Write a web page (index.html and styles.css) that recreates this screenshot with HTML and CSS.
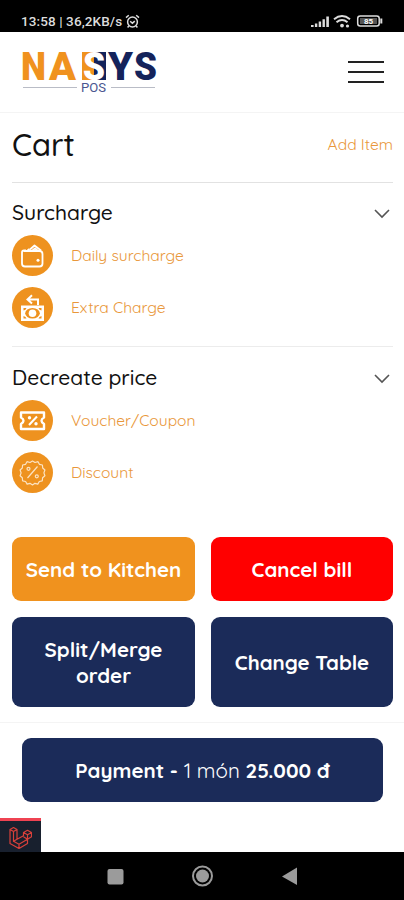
FILE: index.html
```html
<!DOCTYPE html>
<html lang="en">

<head>
  <meta charset="utf-8">
  <meta name="viewport" content="width=device-width, initial-scale=1.0">
  <title>Nasys POS - Cart</title>
  <link rel="stylesheet" href="styles.css">
</head>

<body>

  <div class="status-bar">
    <span class="status-time">13:58 | 36,2KB/s</span>
    <svg class="alarm" width="15" height="15" viewBox="0 0 15 15" fill="none" stroke="#ddd" stroke-width="1.5">
      <circle cx="7.5" cy="8" r="4.9"/>
      <path d="M1 3.6 3.8 1.2M14 3.6 11.2 1.2M5.2 7.2l2.2 2 2.4-2M3.8 12l-1.2 1.5M11.2 12l1.2 1.5"/>
    </svg>
    <svg class="status-icons" width="73" height="15" viewBox="0 0 73 15">
      <g fill="#ddd">
        <path d="M0 11h2.6v2H0zM3.9 9.4h2.4V13H3.9zM7.7 7.4h2.4V13H7.7zM11.5 5.2h2.4V13h-2.4zM15.3 2.5h2.6V13h-2.6z"/>
        <circle cx="31" cy="11.6" r="1.9"/>
        <circle cx="36.5" cy="12" r="1.6"/>
      </g>
      <g fill="none" stroke="#ddd" stroke-width="2">
        <path d="M23 5.2q8-6.4 16 0M25.5 8.2q5.5-4.4 11 0"/>
        <rect x="46.7" y="1.9" width="21.5" height="10" rx="2.5" stroke-width="1.5"/>
        <path d="M70.300 4.500v5"/>
      </g>
      <rect x="49" y="4" width="17" height="6" fill="#555"/>
      <text x="57.5" y="10" text-anchor="middle" class="battery">85</text>
    </svg>
  </div>

  <header class="header">
    <svg class="logo" width="136" height="44" viewBox="0 0 136 44">
      <text x="-1" y="30" class="logo-text orange" textLength="25" lengthAdjust="spacingAndGlyphs">N</text>
      <text x="27" y="30" class="logo-text orange" textLength="27" lengthAdjust="spacingAndGlyphs">A</text>
      <path d="M60 2h12v28H60z" fill="#f0921e"/>
      <path d="M72 2h12v28H72z" fill="#14235b"/>
      <text x="61" y="30" class="logo-text white" textLength="22" lengthAdjust="spacingAndGlyphs">S</text>
      <text x="86" y="30" class="logo-text navy" textLength="25" lengthAdjust="spacingAndGlyphs">Y</text>
      <text x="112" y="30" class="logo-text navy" textLength="23" lengthAdjust="spacingAndGlyphs">S</text>
      <path d="M1 37.500h54M89 37.500h44" stroke="#b9bcc6"/>
      <text x="59" y="42" class="logo-sub" textLength="25" lengthAdjust="spacingAndGlyphs">POS</text>
    </svg>
    <div class="menu">
      <span></span>
      <span></span>
      <span></span>
    </div>
  </header>

  <main class="cart">
    <div class="cart-title">
      <h1>Cart</h1>
      <a class="add-item">Add Item</a>
    </div>

    <section class="group">
      <div class="group-head">
        <h2>Surcharge</h2>
        <svg width="16" height="10" viewBox="0 0 16 10"><path d="M1 1l7 7 7-7" fill="none" stroke="#555" stroke-width="1.6"/></svg>
      </div>
      <a class="option">
        <svg width="41" height="41" viewBox="0 0 41 41">
          <circle cx="20.5" cy="20.5" r="20.5" fill="#ee921f"/>
          <g fill="none" stroke="#fff" stroke-width="1.8" stroke-linejoin="round">
            <path d="M12 16h15.500q3 0 3 3v9.500q0 3-3 3h-14.500q-3 0-3-3V17.500q0-2 2-2h2"/>
            <path d="M15.500 15.500l2-1.500M18 14.500l4.500-4 6.500 5M20.500 15.500l2.500-2 2.500 2"/>
          </g>
          <circle cx="26" cy="25.3" r="1.5" fill="#fff"/>
        </svg>
        <span>Daily surcharge</span>
      </a>
      <a class="option">
        <svg width="41" height="41" viewBox="0 0 41 41">
          <circle cx="20.5" cy="20.5" r="20.5" fill="#ee921f"/>
          <path d="M9 18.500h23v15.500H9z" fill="#fff"/>
          <path d="M11.500 21h3q-.5 2-3 2.500zM29.500 21h-3q.5 2 3 2.500zM11.500 31.500h3q-.5-2-3-2.500zM29.500 31.500h-3q.5-2 3-2.500z" fill="#ee921f"/>
          <ellipse cx="20.5" cy="26.2" rx="7.3" ry="5.3" fill="#ee921f"/>
          <circle cx="20.5" cy="26.2" r="3.8" fill="#fff"/>
          <path d="M26 18v-5.500h-9.500M20 8.300l-4.500 4.200 4.500 4" fill="none" stroke="#fff" stroke-width="2"/>
        </svg>
        <span>Extra Charge</span>
      </a>
    </section>

    <section class="group last">
      <div class="group-head">
        <h2>Decreate price</h2>
        <svg width="16" height="10" viewBox="0 0 16 10"><path d="M1 1l7 7 7-7" fill="none" stroke="#555" stroke-width="1.6"/></svg>
      </div>
      <a class="option">
        <svg width="41" height="41" viewBox="0 0 41 41">
          <circle cx="20.5" cy="20.5" r="20.5" fill="#ee921f"/>
          <g fill="none" stroke="#fff" stroke-width="2.4" stroke-linejoin="round">
            <path d="M9 12.500h23v5q-5 3 0 6.500v5H9v-5q5-3.500 0-6.500z"/>
            <path d="M17 25l8-8.500" stroke-width="2"/>
          </g>
          <circle cx="17.5" cy="17.8" r="1.7" fill="#fff"/>
          <circle cx="24" cy="23.8" r="1.7" fill="#fff"/>
        </svg>
        <span>Voucher/Coupon</span>
      </a>
      <a class="option">
        <svg width="41" height="41" viewBox="0 0 41 41">
          <circle cx="20.5" cy="20.5" r="20.5" fill="#ee921f"/>
          <g fill="none" stroke="#fbe3c4" stroke-width="1.2" stroke-linejoin="round">
            <path d="M20.500 9l2.500 1.500 3-.8 1.400 2.600 3 .7.300 3 2.200 2-1 2.900 1 2.900-2.300 2-.3 3-3 .7-1.500 2.600-2.900-.8-2.400 1.600-2.500-1.600-2.900.8-1.500-2.600-3-.7-.3-3-2.200-2 1-2.900-1-2.900 2.200-2 .3-3 3-.7L15 9.700l3 .8z"/>
            <path d="M15.500 26l10-11.500"/>
            <circle cx="16.5" cy="16.8" r="1.5"/>
            <circle cx="24.8" cy="24.3" r="1.5"/>
          </g>
        </svg>
        <span>Discount</span>
      </a>
    </section>

    <div class="actions">
      <button type="button" class="btn send">Send to Kitchen</button>
      <button type="button" class="btn cancel">Cancel bill</button>
      <button type="button" class="btn">Split/Merge order</button>
      <button type="button" class="btn">Change Table</button>
    </div>
  </main>

  <footer class="footer">
    <button type="button" class="btn payment">Payment - <span>1 món</span> 25.000 đ</button>
    <div class="debugbar">
      <svg width="23" height="23" viewBox="0 0 23 23" fill="none" stroke="#d8403a" stroke-width="1.2" stroke-linejoin="round">
        <path d="M1 3.500L4.500 1.500 8 3.500v9.800l6.500-3.600V6.500l4-2.200 4 2.200v4.300l-4 2.400v4.300l-8.500 5-9-5zM1 3.500l3.500 2L8 3.500M4.500 5.500v9.800L8 13.300M4.500 15.300l5.500 3 8.500-5.100M10 18.300v4.200M14.500 6.500l4 2.300 4-2.300M18.500 8.800v4.400l-4-2.500"/>
      </svg>
    </div>
  </footer>

  <nav class="nav-bar">
    <svg width="404" height="48" viewBox="0 0 404 48">
      <rect x="107.5" y="17" width="16" height="15.5" rx="2" fill="#9b9b9b"/>
      <circle cx="202.5" cy="24" r="9.5" fill="none" stroke="#9b9b9b" stroke-width="2"/>
      <circle cx="202.5" cy="24" r="6.5" fill="#9b9b9b"/>
      <path d="M282 24.500l15-9v17.500z" fill="#9b9b9b"/>
    </svg>
  </nav>

</body>

</html>
```
FILE: styles.css
```css
* {
  box-sizing: border-box;
}

body {
  margin: 0;
  height: 900px;
  display: flex;
  flex-direction: column;
  background: #fff;
  color: #111;
  font-family: Quicksand, Inter, "Open Sans", sans-serif;
}

h1, h2 {
  margin: 0;
  font-weight: 500;
}

/* phone status bar */
.status-bar {
  height: 32px;
  padding: 10px 20px 0 21px;
  display: flex;
  align-items: center;
  background: #000;
  color: #ddd;
  font-family: Roboto, sans-serif;
  font-size: 13.5px;
  font-weight: 500;
}
.status-time {
  letter-spacing: 0.1px;
}
.alarm {
  margin-left: 3px;
}
.status-icons {
  margin-left: auto;
}
.battery {
  font-size: 8px;
  font-weight: 700;
  fill: #fff;
}

.header {
  height: 81px;
  padding: 0 20px 0 22px;
  display: flex;
  align-items: center;
  justify-content: space-between;
  border-bottom: 1px solid #f4f4f4;
}
.logo {
  overflow: visible;
}
.logo-text {
  font-family: Roboto, sans-serif;
  font-size: 39px;
  font-weight: 900;
}
.logo-sub {
  font-family: Roboto, sans-serif;
  font-size: 12px;
  fill: #4a5690;
}
.orange {
  fill: #f0921e;
}
.white {
  fill: #fff;
}
.navy {
  fill: #14235b;
}
.menu {
  width: 36px;
  display: flex;
  flex-direction: column;
  gap: 8px;
}
.menu span {
  height: 2px;
  background: #222;
}

.cart {
  flex: 1;
  padding: 0 11px 0 12px;
}
.cart-title {
  height: 70px;
  display: flex;
  align-items: center;
  justify-content: space-between;
  border-bottom: 1px solid #e2e2e2;
}
.cart-title h1 {
  font-size: 31px;
  padding-bottom: 6px;
}
.add-item {
  color: #e9973a;
  font-size: 15.6px;
  padding-bottom: 8px;
}

.group {
  height: 164px;
  padding-top: 15px;
  border-bottom: 1px solid #ececec;
}
.group.last {
  border: 0;
  height: 190px;
  padding-top: 16px;
}
.group-head {
  height: 32px;
  padding-right: 3px;
  display: flex;
  align-items: center;
  justify-content: space-between;
}
.group-head h2 {
  font-size: 21px;
  padding-bottom: 4px;
}
.option {
  height: 41px;
  margin: 5px 0 11px;
  display: flex;
  align-items: center;
  gap: 18px;
  color: #e9973a;
  font-size: 15.6px;
}
.option + .option {
  margin-top: 0;
}
.option span {
  padding-bottom: 2px;
}

.actions {
  display: grid;
  grid-template-columns: 183px 182px;
  grid-template-rows: 64px 90px;
  gap: 16px;
}
.btn {
  padding: 0 6px;
  border: 0;
  border-radius: 9px;
  background: #1b2b59;
  color: #fff;
  font-family: inherit;
  font-size: 20.5px;
  font-weight: 700;
  line-height: 26px;
}
.send {
  background: #f0921e;
}
.cancel {
  background: #ff0000;
}

.footer {
  height: 130px;
  position: relative;
  padding: 15px 21px 0 22px;
  border-top: 1px solid #f4f4f4;
}
.payment {
  width: 100%;
  height: 64px;
}
.payment span {
  font-weight: 400;
}
.debugbar {
  position: absolute;
  left: 0;
  bottom: 0;
  width: 41px;
  height: 34px;
  padding: 5px 0 0 9px;
  background: #18202e;
  border-top: 3px solid #ef4352;
}
.debugbar svg {
  display: block;
}

.nav-bar {
  height: 48px;
  background: #000;
}
```
